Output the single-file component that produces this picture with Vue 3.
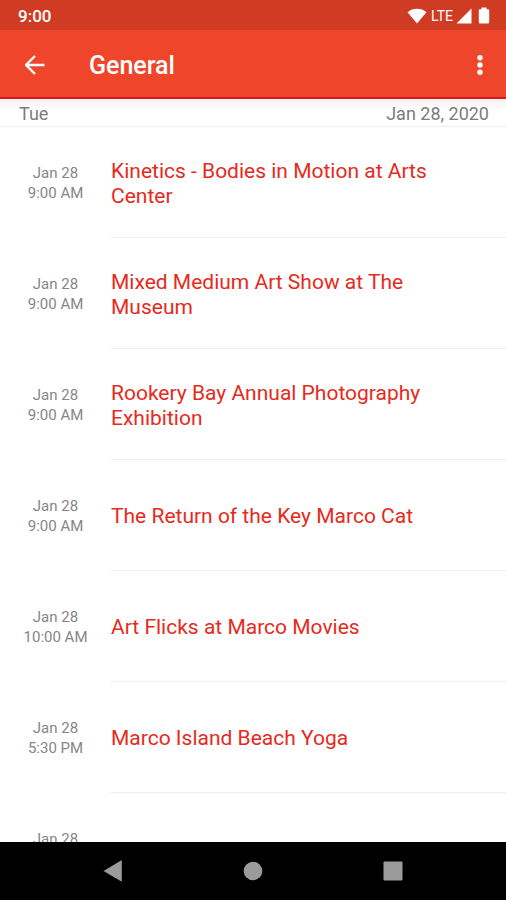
<script setup>
const events = [
  { date: 'Jan 28', time: '9:00 AM', title: 'Kinetics - Bodies in Motion at Arts Center' },
  { date: 'Jan 28', time: '9:00 AM', title: 'Mixed Medium Art Show at The Museum' },
  { date: 'Jan 28', time: '9:00 AM', title: 'Rookery Bay Annual Photography Exhibition' },
  { date: 'Jan 28', time: '9:00 AM', title: 'The Return of the Key Marco Cat' },
  { date: 'Jan 28', time: '10:00 AM', title: 'Art Flicks at Marco Movies' },
  { date: 'Jan 28', time: '5:30 PM', title: 'Marco Island Beach Yoga' },
  { date: 'Jan 28', time: '', title: '' },
]
</script>

<template>
  <div class="screen">
    <div class="status">
      <span class="clock">9:00</span>
      <div class="indicators">
        <svg class="wifi" viewBox="0 0 20 16" aria-hidden="true"><path d="M0.5 4.2C6 -0.4 14 -0.4 19.5 4.2L10 15.5Z" /></svg>
        <span class="lte">LTE</span>
        <svg class="signal" viewBox="0 0 16 16" aria-hidden="true"><path d="M0.5 15.5L15.5 0.5V15.5Z" /></svg>
        <svg class="battery" viewBox="0 0 12 17" aria-hidden="true"><path d="M3.5 0.5h5v1.7h1.6q1.1 0 1.1 1.1v12q0 1.2-1.2 1.2H2q-1.2 0-1.2-1.2v-12q0-1.1 1.1-1.1h1.6z" /></svg>
      </div>
    </div>

    <header class="appbar">
      <button class="icon-button" type="button" aria-label="Back">
        <svg class="arrow" viewBox="0 0 20 20" aria-hidden="true"><path d="M19.5 10H1.5M10 1L1 10L10 19" /></svg>
      </button>
      <h1>General</h1>
      <button class="icon-button" type="button" aria-label="More options">
        <svg class="dots" viewBox="0 0 6 20" aria-hidden="true">
          <circle cx="3" cy="2.7" r="2.7" /><circle cx="3" cy="10" r="2.7" /><circle cx="3" cy="17.3" r="2.7" />
        </svg>
      </button>
    </header>

    <main class="content">
      <h2 class="day"><span>Tue</span><span>Jan 28, 2020</span></h2>
      <ul class="events">
        <li v-for="(event, i) in events" :key="i" class="event">
          <div class="when">
            <span>{{ event.date }}</span>
            <span>{{ event.time }}</span>
          </div>
          <div class="what"><a v-if="event.title" href="#">{{ event.title }}</a></div>
        </li>
      </ul>
    </main>

    <nav class="navbar">
      <button type="button" aria-label="Back">
        <svg viewBox="0 0 20 22" aria-hidden="true"><path d="M0.5 11L18 0.6Q18.8 0.3 18.8 1.2V20.8Q18.8 21.7 18 21.3Z" /></svg>
      </button>
      <button type="button" aria-label="Home">
        <svg viewBox="0 0 20 22" aria-hidden="true"><circle cx="10" cy="11" r="9.3" /></svg>
      </button>
      <button type="button" aria-label="Recent apps">
        <svg viewBox="0 0 20 22" aria-hidden="true"><rect x="0.5" y="1.5" width="19" height="19" rx="1" /></svg>
      </button>
    </nav>
  </div>
</template>

<style>
body {
  margin: 0;
}
</style>

<style scoped>
.screen {
  display: flex;
  flex-direction: column;
  height: 100vh;
  overflow: hidden;
  background: #fff;
  font-family: Roboto, "Liberation Sans", sans-serif;
}
button {
  display: flex;
  align-items: center;
  justify-content: center;
  padding: 0;
  border: 0;
  background: none;
}
.status {
  display: flex;
  align-items: center;
  justify-content: space-between;
  flex: none;
  box-sizing: border-box;
  height: 30px;
  padding: 1px 16px 0 18px;
  background: #cf3b23;
  color: #fff;
}
.clock {
  font-size: 17px;
  font-weight: 500;
  line-height: 28px;
}
.indicators {
  display: flex;
  align-items: center;
  gap: 3px;
}
.indicators svg {
  fill: #fff;
}
.wifi {
  width: 20px;
  height: 16px;
}
.lte {
  margin-left: 1px;
  font-size: 14px;
  line-height: 28px;
}
.signal {
  width: 16px;
  height: 16px;
}
.battery {
  width: 12px;
  height: 17px;
  margin-left: 3px;
}
.appbar {
  display: flex;
  align-items: center;
  flex: none;
  box-sizing: border-box;
  height: 69px;
  padding: 2px 6px 0 15px;
  border-bottom: 2px solid #dc1a1c;
  background: #ee452b;
}
.icon-button {
  width: 40px;
  height: 40px;
}
.arrow {
  width: 20px;
  height: 20px;
  fill: none;
  stroke: #fff;
  stroke-width: 2.4;
}
.dots {
  width: 6px;
  height: 20px;
  fill: #fff;
}
h1 {
  flex: 1;
  margin: 0 0 0 34px;
  padding-top: 2px;
  color: #fff;
  font-size: 25px;
  font-weight: 500;
  line-height: 32px;
}
.content {
  flex: 1;
  min-height: 0;
  overflow: hidden;
}
.day {
  display: flex;
  justify-content: space-between;
  box-sizing: border-box;
  height: 28px;
  margin: 0;
  padding: 2px 17px 0 19px;
  border-bottom: 1px solid #eee;
  background: linear-gradient(#f3f3f3, #fff 12px);
  color: #7c7c7c;
  font-size: 18px;
  font-weight: 400;
  line-height: 26px;
}
.events {
  margin: 0;
  padding: 0;
  list-style: none;
}
.event {
  display: flex;
  height: 111px;
}
.when {
  display: flex;
  flex: none;
  flex-direction: column;
  justify-content: center;
  width: 111px;
  color: #868686;
  font-size: 15px;
  line-height: 20px;
  text-align: center;
}
.when span {
  min-height: 20px;
}
.what {
  display: flex;
  flex: 1;
  align-items: center;
  padding: 3px 50px 0 0;
  border-bottom: 1px solid #eee;
}
.what a {
  color: #e62a20;
  font-size: 21px;
  line-height: 25px;
  text-decoration: none;
}
.navbar {
  display: flex;
  align-items: center;
  justify-content: center;
  gap: 100px;
  flex: none;
  height: 58px;
  background: #000;
}
.navbar button {
  width: 40px;
  height: 40px;
}
.navbar svg {
  width: 20px;
  height: 22px;
  fill: #9b9b9b;
}
</style>
